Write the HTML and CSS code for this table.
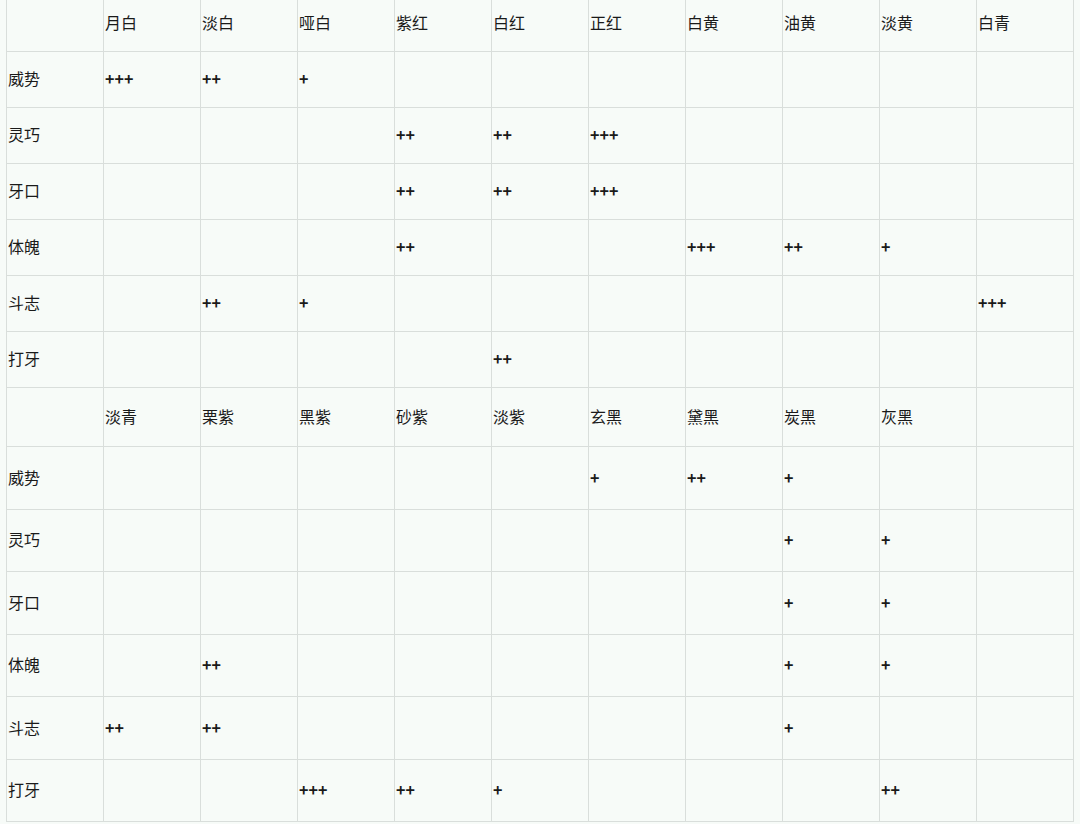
FILE: index.html
```html
<!DOCTYPE html>
<html lang="zh">
<head>
<meta charset="utf-8">
<link rel="stylesheet" href="styles.css">
</head>
<body>
<table class="grid">
<colgroup><col><col><col><col><col><col><col><col><col><col><col></colgroup>
<tr class="r-head1"><td></td><td>月白</td><td>淡白</td><td>哑白</td><td>紫红</td><td>白红</td><td>正红</td><td>白黄</td><td>油黄</td><td>淡黄</td><td>白青</td></tr>
<tr class="r-a"><td>威势</td><td class="p">+++</td><td class="p">++</td><td class="p">+</td><td></td><td></td><td></td><td></td><td></td><td></td><td></td></tr>
<tr class="r-a"><td>灵巧</td><td></td><td></td><td></td><td class="p">++</td><td class="p">++</td><td class="p">+++</td><td></td><td></td><td></td><td></td></tr>
<tr class="r-a"><td>牙口</td><td></td><td></td><td></td><td class="p">++</td><td class="p">++</td><td class="p">+++</td><td></td><td></td><td></td><td></td></tr>
<tr class="r-a"><td>体魄</td><td></td><td></td><td></td><td class="p">++</td><td></td><td></td><td class="p">+++</td><td class="p">++</td><td class="p">+</td><td></td></tr>
<tr class="r-a"><td>斗志</td><td></td><td class="p">++</td><td class="p">+</td><td></td><td></td><td></td><td></td><td></td><td></td><td class="p">+++</td></tr>
<tr class="r-a"><td>打牙</td><td></td><td></td><td></td><td></td><td class="p">++</td><td></td><td></td><td></td><td></td><td></td></tr>
<tr class="r-head2"><td></td><td>淡青</td><td>栗紫</td><td>黑紫</td><td>砂紫</td><td>淡紫</td><td>玄黑</td><td>黛黑</td><td>炭黑</td><td>灰黑</td><td></td></tr>
<tr class="r-b"><td>威势</td><td></td><td></td><td></td><td></td><td></td><td class="p">+</td><td class="p">++</td><td class="p">+</td><td></td><td></td></tr>
<tr class="r-c"><td>灵巧</td><td></td><td></td><td></td><td></td><td></td><td></td><td></td><td class="p">+</td><td class="p">+</td><td></td></tr>
<tr class="r-b"><td>牙口</td><td></td><td></td><td></td><td></td><td></td><td></td><td></td><td class="p">+</td><td class="p">+</td><td></td></tr>
<tr class="r-c"><td>体魄</td><td></td><td class="p">++</td><td></td><td></td><td></td><td></td><td></td><td class="p">+</td><td class="p">+</td><td></td></tr>
<tr class="r-b"><td>斗志</td><td class="p">++</td><td class="p">++</td><td></td><td></td><td></td><td></td><td></td><td class="p">+</td><td></td><td></td></tr>
<tr class="r-c"><td>打牙</td><td></td><td></td><td class="p">+++</td><td class="p">++</td><td class="p">+</td><td></td><td></td><td></td><td class="p">++</td><td></td></tr>
</table>
</body>
</html>
```
FILE: styles.css
```css
html, body {
  margin: 0;
  padding: 0;
  background: #f7fbf8;
}
body {
  padding-left: 6px;
  font-family: "Noto Sans CJK SC", "Noto Sans", sans-serif;
  font-size: 16px;
  color: #1a1a1a;
}
.grid {
  border-collapse: collapse;
  table-layout: fixed;
  width: 1068px;
  margin-top: -5px;
}
.grid col {
  width: 97px;
}
.grid td {
  border: 1px solid #d9dedb;
  padding: 0 1px 3px 1px;
  vertical-align: middle;
  text-align: left;
  line-height: 20px;
  white-space: nowrap;
}
.grid td.p {
  font-weight: 600;
}
.r-head1, .r-a { height: 56px; }
.r-head2 { height: 59px; }
.r-b { height: 63px; }
.r-c { height: 62px; }
```
